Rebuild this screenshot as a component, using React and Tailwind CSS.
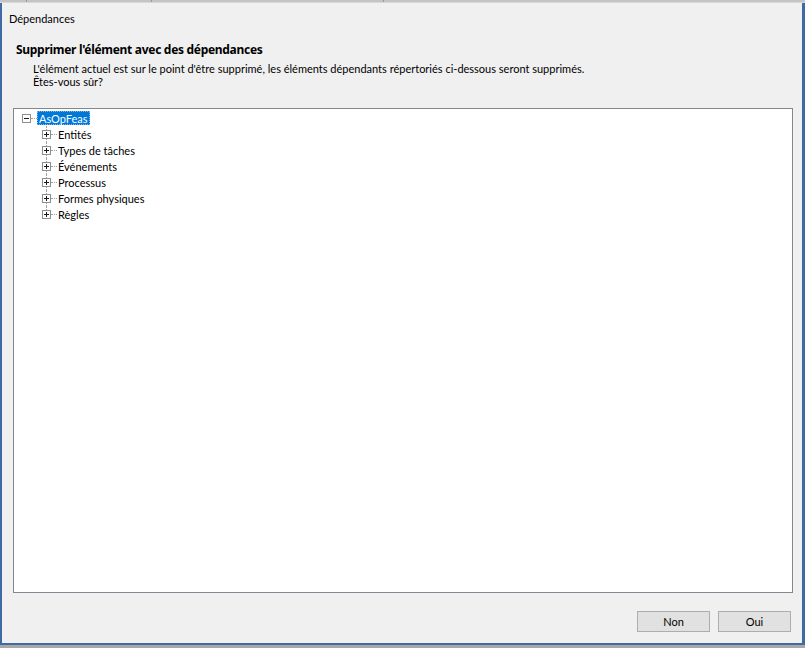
import React from "react";

const font = { fontFamily: 'Lato, "Noto Sans", "Liberation Sans", sans-serif' };
const boldFont = { fontFamily: '"Noto Sans", "Liberation Sans", sans-serif' };

function ToggleBox({ open }) {
  return (
    <svg width="9" height="9" viewBox="0 0 9 9" shapeRendering="crispEdges" className="block">
      <rect x="0.5" y="0.5" width="8" height="8" fill="#ffffff" stroke="#8f8f8f" />
      <line x1="2" y1="4.5" x2="7" y2="4.5" stroke="#1a1a1a" />
      {!open && <line x1="4.5" y1="2" x2="4.5" y2="7" stroke="#1a1a1a" />}
    </svg>
  );
}

const children = [
  "Entités",
  "Types de tâches",
  "Événements",
  "Processus",
  "Formes physiques",
  "Règles",
];

export default function App() {
  return (
    <div
      className="w-[805px] h-[648px] flex flex-col bg-[#a9a9a9] overflow-hidden text-[11px] text-black"
      style={font}
    >
      {/* strip of the window behind */}
      <div className="h-[3px] bg-[#c4c4c4] flex border-b border-[#d8d8d8]">
        <div className="w-[27px] border-r border-[#9a9a9a]" />
        <div className="w-[125px] border-r border-[#9a9a9a]" />
        <div className="w-[232px] border-r border-[#9a9a9a]" />
        <div className="flex-1" />
      </div>

      {/* dialog window */}
      <div className="h-[642px] bg-[#f0f0f0] border-l-2 border-r-[3px] border-b-2 border-[#3f6aa6] flex flex-col">
        <div className="pl-[7px] pt-[8px] leading-[16px]">Dépendances</div>

        <div
          className="pl-[14px] mt-[15px] leading-[16px] text-[12px] font-bold tracking-[-0.3px]"
          style={boldFont}
        >
          Supprimer l'élément avec des dépendances
        </div>

        <div className="pl-[31px] mt-[4px] leading-[13px]">
          <div className="h-[13px]">
            L'élément actuel est sur le point d'être supprimé, les éléments dépendants répertoriés ci-dessous seront supprimés.
          </div>
          <div className="h-[13px]">Êtes-vous sûr?</div>
        </div>

        {/* tree */}
        <div className="ml-[11px] mt-[20px] w-[780px] h-[485px] bg-white border border-[#828790] pt-[1px] pl-[8px]">
          <div className="flex items-center h-[16px]">
            <ToggleBox open />
            <div className="w-[6px] border-t border-dotted border-[#a0a0a0]" />
            <div className="bg-[#0078d7] text-white h-[14px] leading-[13px] px-[1px] border border-dotted border-[#8ab6e6]">
              AsOpFeas
            </div>
          </div>
          {children.map((c, i) => (
            <div key={c} className="flex items-center h-[16px]">
              <div className="w-[20px]" />
              <div className="relative w-[9px] h-[16px] flex items-center">
                <div
                  className={
                    i === children.length - 1
                      ? "absolute left-[4px] top-0 h-[8px] border-l border-dotted border-[#a0a0a0]"
                      : "absolute left-[4px] top-0 h-[16px] border-l border-dotted border-[#a0a0a0]"
                  }
                />
                <div className="relative">
                  <ToggleBox open={false} />
                </div>
              </div>
              <div className="w-[6px] border-t border-dotted border-[#a0a0a0]" />
              <div className="pl-[1px] h-[16px] leading-[16px] pt-[1px]">{c}</div>
            </div>
          ))}
        </div>

        {/* buttons */}
        <div className="mt-[18px] flex justify-end gap-[8px] pr-[11px]">
          <button className="w-[73px] h-[21px] bg-[#e1e1e1] border border-[#adadad] text-[11px] leading-[19px]">
            Non
          </button>
          <button className="w-[73px] h-[21px] bg-[#e1e1e1] border border-[#adadad] text-[11px] leading-[19px]">
            Oui
          </button>
        </div>
      </div>

      <div className="h-[3px] bg-[#a8a8a8]" />
    </div>
  );
}
